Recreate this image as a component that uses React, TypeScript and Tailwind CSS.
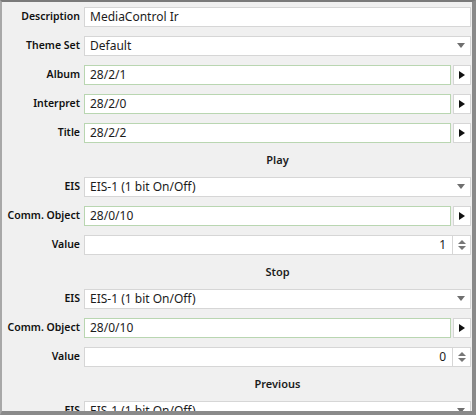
import React from "react";

type Row =
  | { kind: "text"; label: string; value: string }
  | { kind: "select"; label: string; value: string }
  | { kind: "address"; label: string; value: string }
  | { kind: "number"; label: string; value: string }
  | { kind: "header"; label: string };

const rows: Row[] = [
  { kind: "text", label: "Description", value: "MediaControl Ir" },
  { kind: "select", label: "Theme Set", value: "Default" },
  { kind: "address", label: "Album", value: "28/2/1" },
  { kind: "address", label: "Interpret", value: "28/2/0" },
  { kind: "address", label: "Title", value: "28/2/2" },
  { kind: "header", label: "Play" },
  { kind: "select", label: "EIS", value: "EIS-1 (1 bit On/Off)" },
  { kind: "address", label: "Comm. Object", value: "28/0/10" },
  { kind: "number", label: "Value", value: "1" },
  { kind: "header", label: "Stop" },
  { kind: "select", label: "EIS", value: "EIS-1 (1 bit On/Off)" },
  { kind: "address", label: "Comm. Object", value: "28/0/10" },
  { kind: "number", label: "Value", value: "0" },
  { kind: "header", label: "Previous" },
  { kind: "select", label: "EIS", value: "EIS-1 (1 bit On/Off)" },
];

function DownArrow() {
  return (
    <svg width="8" height="5" viewBox="0 0 8 5" className="shrink-0">
      <path d="M0 0h8L4 5z" fill="#6f6f6f" />
    </svg>
  );
}

function Field({ row }: { row: Exclude<Row, { kind: "header" }> }) {
  if (row.kind === "address") {
    return (
      <div className="flex flex-1 gap-[2px]">
        <div className="flex h-[20px] flex-1 items-center border border-[#b9d6b1] bg-white px-[5px]">
          {row.value}
        </div>
        <div className="flex h-[20px] w-[18px] items-center justify-center border border-[#d6d6d6] bg-white">
          <svg width="6" height="8" viewBox="0 0 6 8">
            <path d="M0 0l6 4-6 4z" fill="#111" />
          </svg>
        </div>
      </div>
    );
  }
  if (row.kind === "select") {
    return (
      <div className="flex h-[20px] flex-1 items-center justify-between border border-[#d6d6d6] bg-white pl-[5px] pr-[5px]">
        <span>{row.value}</span>
        <DownArrow />
      </div>
    );
  }
  if (row.kind === "number") {
    return (
      <div className="flex h-[20px] flex-1 items-stretch border border-[#d6d6d6] bg-white">
        <div className="flex flex-1 items-center justify-end pr-[6px]">{row.value}</div>
        <div className="flex w-[18px] flex-col items-center justify-center gap-[2px] border-l border-[#d6d6d6]">
          <svg width="8" height="4" viewBox="0 0 8 4">
            <path d="M0 4L4 0l4 4z" fill="#777" />
          </svg>
          <svg width="8" height="4" viewBox="0 0 8 4">
            <path d="M0 0h8L4 4z" fill="#777" />
          </svg>
        </div>
      </div>
    );
  }
  return (
    <div className="flex h-[20px] flex-1 items-center border border-[#d6d6d6] bg-white px-[5px]">
      {row.value}
    </div>
  );
}

export default function App() {
  return (
    <div
      className="h-[415px] w-[476px] overflow-hidden border-t-2 border-r-4 border-b-4 border-l-2 border-t-[#7a7a7a] border-r-[#8a8a8a] border-b-[#8a8a8a] border-l-[#a8a8a8] bg-[#f0f0f0] text-[12px] text-[#1c1c1c]"
      style={{ fontFamily: '"Segoe UI", "Noto Sans", "Open Sans", sans-serif' }}
    >
      <div className="flex flex-col pr-[1px]">
        {rows.map((row, i) =>
          row.kind === "header" ? (
            <div key={i} className="flex h-[25px] items-center pt-[2px]">
              <div className="w-[82px] shrink-0" />
              <div className="flex-1 text-center text-[11px] font-semibold">{row.label}</div>
            </div>
          ) : (
            <div key={i} className="flex h-[29px] items-center">
              <div className="w-[78px] shrink-0 text-right text-[10.5px] font-semibold text-[#111]">{row.label}</div>
              <div className="w-[4px] shrink-0" />
              <Field row={row} />
            </div>
          )
        )}
      </div>
    </div>
  );
}
